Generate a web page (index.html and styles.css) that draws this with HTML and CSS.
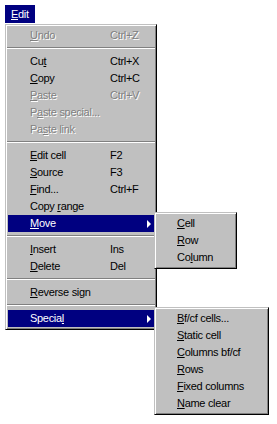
FILE: index.html
```html
<!DOCTYPE html>
<html lang="en">
<head>
    <meta charset="UTF-8">
    <title>Edit menu</title>
    <link rel="stylesheet" href="styles.css">
</head>
<body>
    <div class="menubar">
        <span class="menu-title"><u>E</u>dit</span>
    </div>

    <div class="menu main-menu">
        <div class="item disabled"><span class="label"><u>U</u>ndo</span><span class="key">Ctrl+Z</span></div>
        <div class="separator"></div>
        <div class="item"><span class="label">Cu<u>t</u></span><span class="key">Ctrl+X</span></div>
        <div class="item"><span class="label"><u>C</u>opy</span><span class="key">Ctrl+C</span></div>
        <div class="item disabled"><span class="label"><u>P</u>aste</span><span class="key">Ctrl+V</span></div>
        <div class="item disabled"><span class="label">P<u>a</u>ste special...</span></div>
        <div class="item disabled"><span class="label">Pa<u>s</u>te link</span></div>
        <div class="separator"></div>
        <div class="item"><span class="label"><u>E</u>dit cell</span><span class="key">F2</span></div>
        <div class="item"><span class="label"><u>S</u>ource</span><span class="key">F3</span></div>
        <div class="item"><span class="label"><u>F</u>ind...</span><span class="key">Ctrl+F</span></div>
        <div class="item"><span class="label">Copy <u>r</u>ange</span></div>
        <div class="item active has-sub">
            <span class="label"><u>M</u>ove</span>
            <span class="arrow"></span>
            <div class="menu submenu sub-move">
                <div class="item"><span class="label"><u>C</u>ell</span></div>
                <div class="item"><span class="label"><u>R</u>ow</span></div>
                <div class="item"><span class="label">Co<u>l</u>umn</span></div>
            </div>
        </div>
        <div class="separator"></div>
        <div class="item"><span class="label"><u>I</u>nsert</span><span class="key">Ins</span></div>
        <div class="item"><span class="label"><u>D</u>elete</span><span class="key">Del</span></div>
        <div class="separator"></div>
        <div class="item"><span class="label"><u>R</u>everse sign</span></div>
        <div class="separator"></div>
        <div class="item active has-sub">
            <span class="label">Specia<u>l</u></span>
            <span class="arrow"></span>
            <div class="menu submenu sub-special">
                <div class="item"><span class="label"><u>B</u>f/cf cells...</span></div>
                <div class="item"><span class="label"><u>S</u>tatic cell</span></div>
                <div class="item"><span class="label"><u>C</u>olumns bf/cf</span></div>
                <div class="item"><span class="label"><u>R</u>ows</span></div>
                <div class="item"><span class="label"><u>F</u>ixed columns</span></div>
                <div class="item"><span class="label"><u>N</u>ame clear</span></div>
            </div>
        </div>
    </div>
</body>
</html>
```

FILE: styles.css
```css
:root {
    --face: #c0c0c0;
    --shadow: #808080;
    --dark: #000000;
    --light: #ffffff;
    --select: #000080;
}

* {
    margin: 0;
    padding: 0;
    box-sizing: border-box;
}

html {
    height: 100%;
}

body {
    font-family: 'Liberation Sans', Arial, sans-serif;
    font-size: 11px;
    letter-spacing: -0.3px;
    background: #ffffff;
    color: #000000;
    padding: 5px;
    min-height: 100%;
}

u {
    text-underline-offset: 1px;
}

.menubar {
    display: flex;
    height: 18px;
}

.menu-title {
    background: var(--select);
    color: var(--light);
    line-height: 18px;
    padding: 0 6px;
}

.menu {
    background: var(--face);
    border: 1px solid;
    border-color: var(--face) var(--dark) var(--dark) var(--face);
    box-shadow: inset 1px 1px var(--light), inset -1px -1px var(--shadow);
    padding: 2px;
}

.main-menu {
    width: 152px;
    margin-top: 1px;
}

.item {
    position: relative;
    display: flex;
    align-items: center;
    height: 17px;
    line-height: 17px;
    padding-left: 22px;
    white-space: nowrap;
}

.item .label {
    width: 80px;
}

.item.disabled {
    color: var(--shadow);
    text-shadow: 1px 1px 0 var(--light);
}

.item.active {
    background: var(--select);
    color: var(--light);
}

.arrow {
    margin-left: auto;
    margin-right: 3px;
    width: 0;
    height: 0;
    border-left: 4px solid currentColor;
    border-top: 4px solid transparent;
    border-bottom: 4px solid transparent;
}

.separator {
    height: 2px;
    margin: 3px -1px 4px;
    border-top: 1px solid var(--shadow);
    border-bottom: 1px solid var(--light);
}

/* submenus open to the right of their parent item */
.submenu {
    position: absolute;
    left: 146px;
    top: -3px;
    color: #000000;
    z-index: 2;
}

.submenu .item {
    padding-left: 20px;
}

.submenu .label {
    width: auto;
}

.sub-move {
    width: 83px;
}

.sub-special {
    width: 115px;
}
```
